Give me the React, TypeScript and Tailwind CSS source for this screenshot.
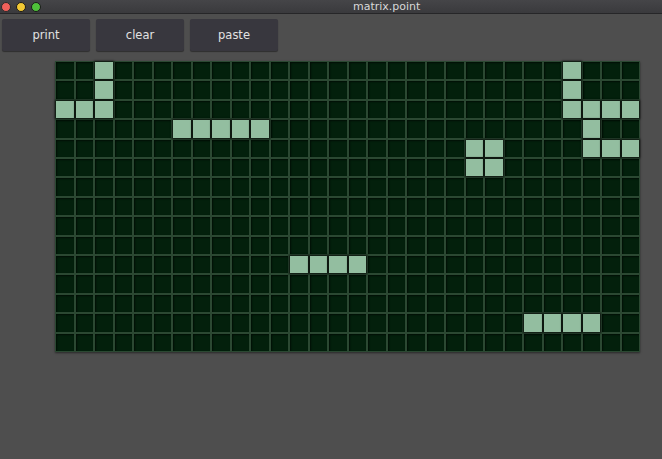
import React from "react";

const lit = new Set<string>([
  "2,0", "2,1", "0,2", "1,2", "2,2",
  "6,3", "7,3", "8,3", "9,3", "10,3",
  "26,0", "26,1", "26,2", "27,2", "28,2", "29,2", "27,3", "27,4", "28,4", "29,4",
  "21,4", "22,4", "21,5", "22,5",
  "12,10", "13,10", "14,10", "15,10",
  "24,13", "25,13", "26,13", "27,13",
]);

export default function App() {
  const cells: React.ReactNode[] = [];
  for (let r = 0; r < 15; r++) {
    for (let c = 0; c < 30; c++) {
      const on = lit.has(`${c},${r}`);
      cells.push(
        <div
          key={`${c}-${r}`}
          className={
            on
              ? "bg-[#93bea0] shadow-[0_0_2px_1px_rgba(0,0,0,0.8)] relative"
              : "bg-[#03200c] shadow-[inset_1px_1px_2px_rgba(0,0,0,0.6)]"
          }
        />
      );
    }
  }
  return (
    <div
      className="w-[662px] h-[459px] bg-[#4e4e4e] overflow-hidden flex flex-col"
      style={{ fontFamily: '"DejaVu Sans", "Liberation Sans", sans-serif' }}
    >
      <div className="h-[14px] bg-gradient-to-b from-[#454548] to-[#3a3a3d] border-b border-[#262628] flex items-center relative shrink-0">
        <div className="flex gap-[5px] pl-[1px] items-center">
          <span className="w-[10px] h-[10px] rounded-full bg-[#f0605a] border border-[#2a2a2a]" />
          <span className="w-[10px] h-[10px] rounded-full bg-[#f2c934] border border-[#1a1a1a]" />
          <span className="w-[10px] h-[10px] rounded-full bg-[#4fc13a] border border-[#1a1a1a]" />
        </div>
        <div className="absolute left-[353px] top-[0px] text-[11px] leading-[13px] text-[#d8d8d8]">
          matrix.point
        </div>
      </div>
      <div className="flex gap-[6px] pl-[2px] pt-[5px]">
        {["print", "clear", "paste"].map((t) => (
          <div
            key={t}
            className="w-[88px] h-[32px] bg-[#38373e] rounded-[2px] shadow-[0_1px_1px_rgba(0,0,0,0.4)] flex items-center justify-center text-[11.5px] text-[#e2e2e2] pt-[1px]"
          >
            {t}
          </div>
        ))}
      </div>
      <div className="pl-[55px] pt-[10px]">
        <div className="w-[585px] h-[291px] bg-[#2b4832] p-[1px] grid grid-cols-[repeat(30,1fr)] grid-rows-[repeat(15,1fr)] gap-[2px] shadow-[0_1px_2px_rgba(0,0,0,0.5)]">
          {cells}
        </div>
      </div>
    </div>
  );
}
